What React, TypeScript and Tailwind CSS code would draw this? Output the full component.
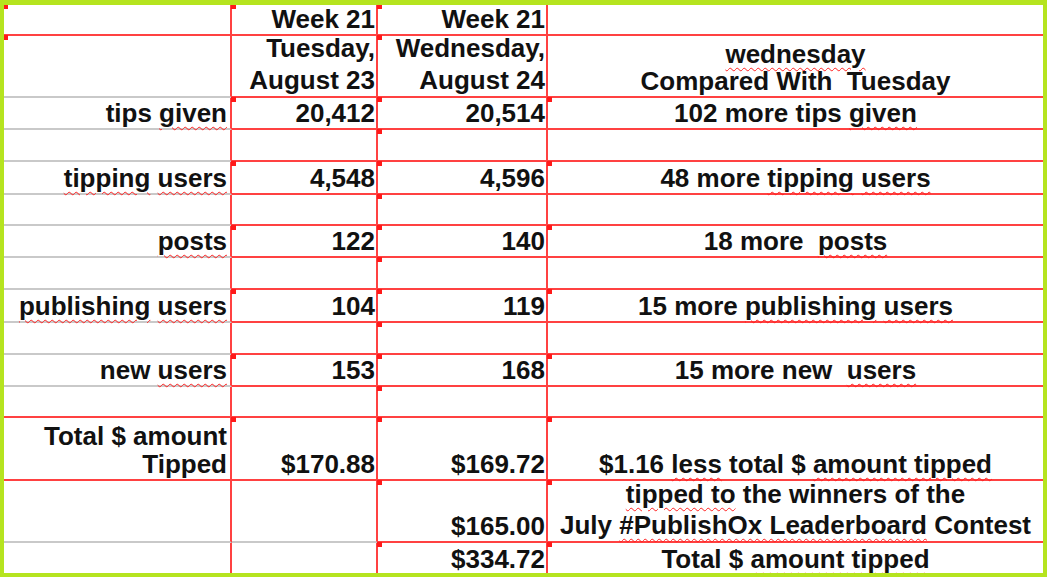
import React from 'react';

type Cell = { text?: React.ReactNode; mark?: boolean; lead?: string; pb?: string };
type Row = { cells: Cell[]; c1Red?: boolean; c2Gray?: boolean };

// wavy red spell-check underline
const W = ({ children }: { children: React.ReactNode }) => (
  <span className="underline decoration-wavy decoration-[#ff2020] decoration-1 underline-offset-[4px]">{children}</span>
);

const rows: Row[] = [
  {
    c1Red: true,
    cells: [{ mark: true }, { text: 'Week 21', mark: true }, { text: 'Week 21', mark: true }, {}],
  },
  {
    cells: [
      { mark: true },
      { text: <>Tuesday,<br />August 23</>, lead: 'leading-[32px]' },
      { text: <>Wednesday,<br />August 24</>, mark: true, lead: 'leading-[32px]' },
      { text: <><W>wednesday</W><br />Compared With&nbsp; Tuesday</>, lead: 'leading-[27px]', pb: 'pb-[1px]' },
    ],
  },
  {
    cells: [
      { text: <>tips <W>given</W></> },
      { text: '20,412', mark: true },
      { text: '20,514', mark: true },
      { text: <>102 more tips <W>given</W></>, mark: true },
    ],
  },
  { cells: [{}, {}, { mark: true }, {}] },
  {
    cells: [
      { text: <><W>tipping</W> <W>users</W></> },
      { text: '4,548', mark: true },
      { text: '4,596', mark: true },
      { text: <>48 more <W>tipping</W> <W>users</W></>, mark: true },
    ],
  },
  { cells: [{}, {}, { mark: true }, {}] },
  {
    cells: [
      { text: <W>posts</W> },
      { text: '122', mark: true },
      { text: '140', mark: true },
      { text: <>18 more&nbsp; <W>posts</W></>, mark: true },
    ],
  },
  { cells: [{}, {}, { mark: true }, {}] },
  {
    cells: [
      { text: <><W>publishing</W> <W>users</W></> },
      { text: '104', mark: true },
      { text: '119', mark: true },
      { text: <>15 more <W>publishing</W> <W>users</W></>, mark: true },
    ],
  },
  { cells: [{}, {}, { mark: true }, {}] },
  {
    cells: [
      { text: <>new <W>users</W></> },
      { text: '153', mark: true },
      { text: '168', mark: true },
      { text: <>15 more new&nbsp; <W>users</W></>, mark: true },
    ],
  },
  { c1Red: true, cells: [{}, {}, { mark: true }, {}] },
  {
    c1Red: true,
    cells: [
      { text: <>Total $ amount<br />Tipped</>, lead: 'leading-[28px]', pb: 'pb-[1px]' },
      { text: '$170.88', mark: true },
      { text: '$169.72', mark: true },
      { text: <>$1.16 <W>less</W> total $ <W>amount tipped</W></>, mark: true },
    ],
  },
  {
    c2Gray: true,
    cells: [
      {},
      {},
      { text: '$165.00', mark: true },
      { text: <><W>tipped to</W> the winners of the<br />July <W>#PublishOx Leaderboard</W> Contest</>, mark: true, lead: 'leading-[31px]' },
    ],
  },
  {
    cells: [
      {},
      {},
      { text: '$334.72', mark: true, lead: 'leading-[28px]' },
      { text: <>Total $ <W>amount tipped</W></>, mark: true, lead: 'leading-[28px]' },
    ],
  },
];

const App = () => {
  return (
    <div className="w-[1050px] h-[578px] bg-white">
      <div
        className="w-[1047px] h-[577px] overflow-hidden border-[#b5e41f] border-t-[5px] border-l-4 border-r-4 border-b-4 bg-white text-[26px] font-bold text-[#111]"
        style={{ fontFamily: '"Liberation Sans", Arial, sans-serif' }}
      >
        <div className="grid grid-cols-[228px_146px_170px_495px] grid-rows-[31px_62px_32px_32px_33px_31px_32px_32px_33px_32px_32px_31px_63px_62px_30px]">
          {rows.map((row, ri) =>
            row.cells.map((cell, ci) => {
              const last = ri === rows.length - 1;
              let bottom = 'border-b-2 border-b-[#ff4141]';
              if (last) bottom = 'border-b-0';
              else if (ci === 0 && !row.c1Red) bottom = 'border-b-2 border-b-[#c9c9c9]';
              else if (ci === 1 && row.c2Gray) bottom = 'border-b-2 border-b-[#c9c9c9]';
              const right = ci < 3 ? 'border-r-2 border-r-[#ff4141]' : 'border-r-0';
              const align =
                ci === 0 ? 'justify-end text-right pr-[3px]' : ci === 3 ? 'justify-center text-center' : 'justify-end text-right pr-[1px]';
              return (
                <div
                  key={`${ri}-${ci}`}
                  className={`relative flex items-end whitespace-nowrap ${bottom} ${right} ${align} ${cell.lead ?? 'leading-[30px]'} ${cell.pb ?? 'pb-0'}`}
                >
                  {cell.mark && <span className="absolute -left-px -top-px w-[5px] h-[5px] bg-[#ff1a1a]" />}
                  {cell.text && <span>{cell.text}</span>}
                </div>
              );
            })
          )}
        </div>
      </div>
    </div>
  );
};

export default App;
